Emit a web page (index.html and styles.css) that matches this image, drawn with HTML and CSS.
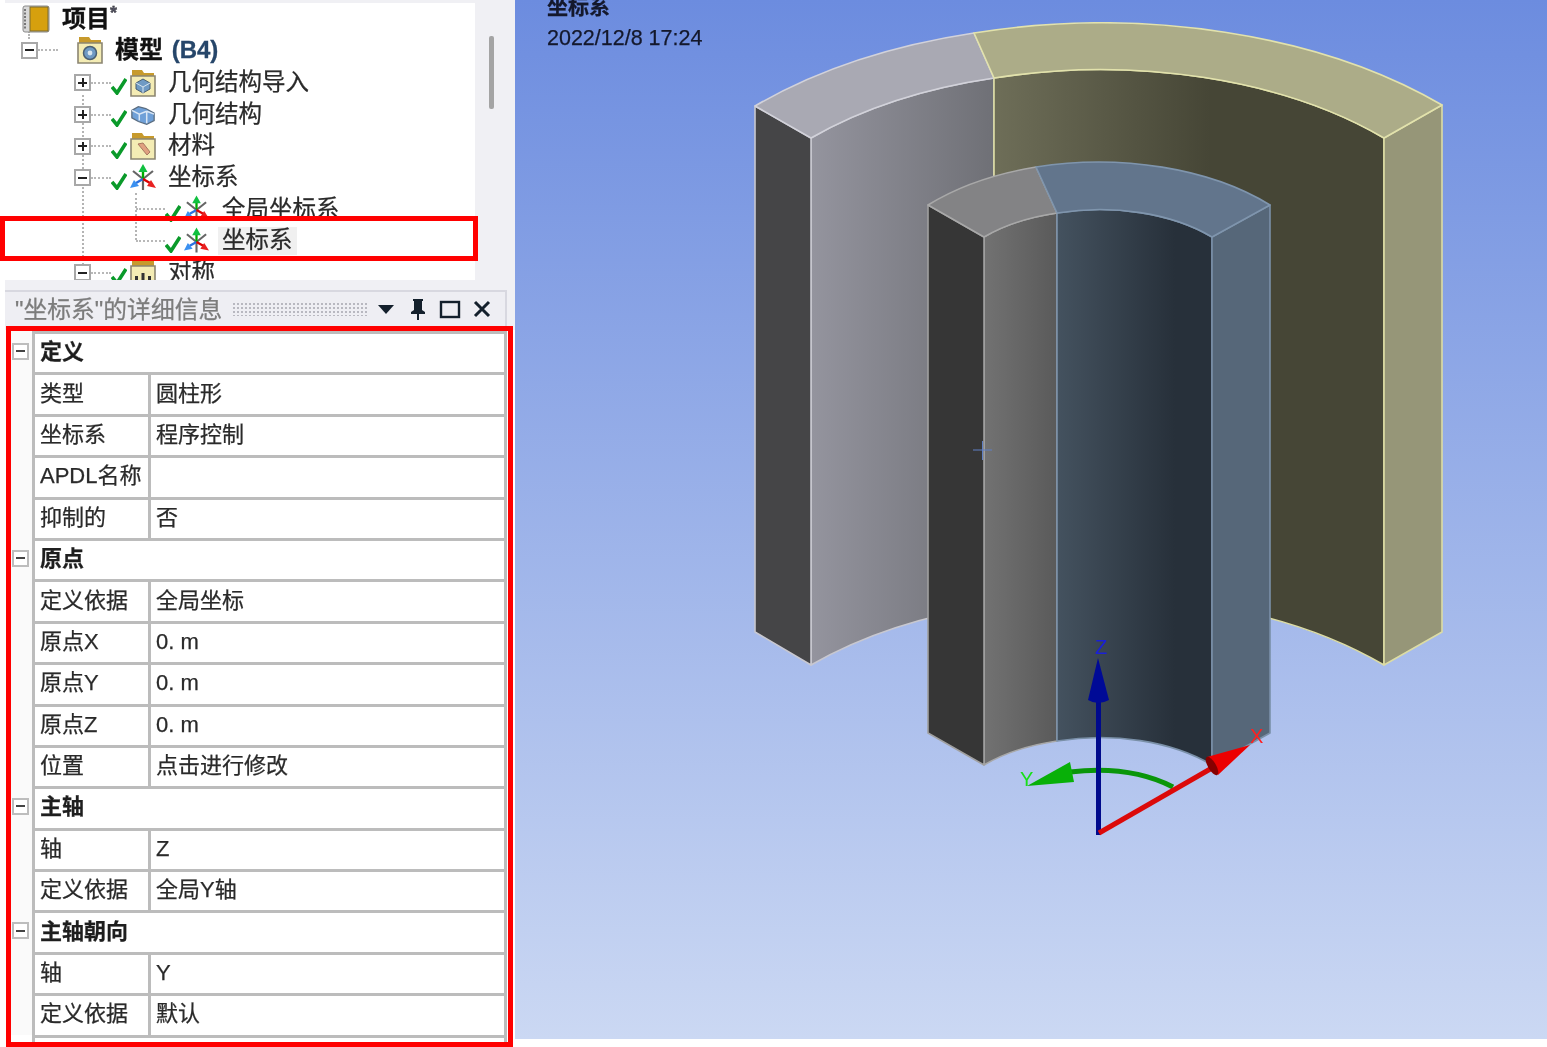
FILE: index.html
```html
<!DOCTYPE html>
<html lang="zh-CN">
<head>
<meta charset="utf-8">
<title>坐标系</title>
<link rel="stylesheet" href="styles.css">
</head>
<body>
<svg class="defs" aria-hidden="true">
  <symbol id="check" viewBox="0 0 16 18"><path d="M1 10l5 6L15 2" fill="none" stroke="#0a9a2a" stroke-width="3.6"/></symbol>
  <symbol id="folder" viewBox="0 0 26 28"><path d="M2 1h10l2 3h10v6H2z" fill="#c79a2c"/><path d="M1 7h24v20H1z" fill="#f4ecb4" stroke="#8c8672" stroke-width="1.6"/></symbol>
  <symbol id="folder-model" viewBox="0 0 26 28"><use href="#folder"/><circle cx="13" cy="17" r="6.5" fill="#6f9ac4" stroke="#4a5f72" stroke-width="1.5"/><circle cx="13" cy="17" r="2.4" fill="#d8e6f0"/></symbol>
  <symbol id="folder-geo" viewBox="0 0 26 28"><use href="#folder"/><path d="M6 14l7-4 7 4v6l-7 4-7-4z" fill="#6f9ac4" stroke="#4a5f72"/><path d="M6 14l7 4 7-4M13 18v6" fill="none" stroke="#d8e6f0"/></symbol>
  <symbol id="folder-mat" viewBox="0 0 26 28"><use href="#folder"/><path d="M8 12l5-1 7 9-3 3z" fill="#e0a080" stroke="#a87860"/></symbol>
  <symbol id="folder-sym" viewBox="0 0 26 28"><path d="M2 1h22v9H2z" fill="#c79a2c"/><path d="M1 7h24v20H1z" fill="#f4ecb4" stroke="#8c8672" stroke-width="1.6"/><path d="M5 22v-5h3v5zM11.500 22v-8h3v8zM18 22v-5h3v5z" fill="#333"/></symbol>
  <symbol id="geo" viewBox="0 0 28 22"><path d="M2 6l7-4 8 2 9 5v8l-8 4-9-3-7-4z" fill="#6fa0d8" stroke="#5a6d80" stroke-width="1.4"/><path d="M2 6l8 4 8-3M10 10v7M18 7l8 3M18 7v13" fill="none" stroke="#d9e6f5" stroke-width="1.6"/></symbol>
  <symbol id="triad" viewBox="0 0 26 28">
    <path d="M13 15L3 7M13 15l10-8M13 15v11" stroke="#666" stroke-width="2.2" fill="none"/>
    <path d="M13 15V6" stroke="#0a0" stroke-width="2.4"/><path d="M13 0l4.500 8h-9z" fill="#10c040"/>
    <path d="M13 15l-7 4" stroke="#2a70e0" stroke-width="2.4"/><path d="M0 24l4-8 5 6z" fill="#3a90f0"/>
    <path d="M13 15l7 4" stroke="#d00" stroke-width="2.4"/><path d="M26 24l-9-2 4-6z" fill="#e82020"/>
  </symbol>
  <symbol id="book" viewBox="0 0 28 28"><rect x="1" y="1" width="26" height="26" rx="2" fill="#d8d8d8" stroke="#8a8a8a"/><rect x="8" y="2" width="18" height="24" fill="#d6a00e" stroke="#7a6a30"/><path d="M3 4v20" stroke="#777" stroke-width="2" stroke-dasharray="2 1.5"/></symbol>
</svg>

<div class="app">
  <aside class="left">
    <nav class="tree">
      <i class="guide guide-root"></i>
      <i class="guide guide-l2"></i>
      <i class="guide guide-l3"></i>
      <div class="row row-root"><svg class="ico ico-book"><use href="#book"/></svg><span class="lbl lbl-bold">项目<sup class="star">*</sup></span></div>
      <div class="row row-l1"><span class="tog minus"></span><span class="dots dots-l1"></span><svg class="ico ico-l1"><use href="#folder-model"/></svg><span class="lbl lbl-bold lbl-l1">模型 <span class="ref">(B4)</span></span></div>
      <div class="row row-l2"><span class="tog plus"></span><span class="dots"></span><svg class="chk"><use href="#check"/></svg><svg class="ico"><use href="#folder-geo"/></svg><span class="lbl">几何结构导入</span></div>
      <div class="row row-l2"><span class="tog plus"></span><span class="dots"></span><svg class="chk"><use href="#check"/></svg><svg class="ico"><use href="#geo"/></svg><span class="lbl">几何结构</span></div>
      <div class="row row-l2"><span class="tog plus"></span><span class="dots"></span><svg class="chk"><use href="#check"/></svg><svg class="ico"><use href="#folder-mat"/></svg><span class="lbl">材料</span></div>
      <div class="row row-l2"><span class="tog minus"></span><span class="dots"></span><svg class="chk"><use href="#check"/></svg><svg class="ico"><use href="#triad"/></svg><span class="lbl">坐标系</span></div>
      <div class="row row-l3"><span class="dots dots-l3"></span><svg class="chk"><use href="#check"/></svg><svg class="ico ico-l3"><use href="#triad"/></svg><span class="lbl lbl-l3">全局坐标系</span></div>
      <div class="row row-l3"><span class="dots dots-l3"></span><svg class="chk"><use href="#check"/></svg><svg class="ico ico-l3"><use href="#triad"/></svg><span class="lbl lbl-l3 selected">坐标系</span></div>
      <div class="row row-l2"><span class="tog minus"></span><span class="dots"></span><svg class="chk"><use href="#check"/></svg><svg class="ico"><use href="#folder-sym"/></svg><span class="lbl">对称</span></div>
    </nav>
    <i class="scrollbar"></i>

    <header class="dhead">
      <span class="dtitle">"坐标系"的详细信息</span>
      <span class="grip"></span>
      <svg class="hbtn" viewBox="0 0 22 22"><path d="M3 7h16l-8 9z" fill="#14202c"/></svg>
      <svg class="hbtn" viewBox="0 0 22 22"><path d="M6 1h10v2h-1v9l3 2v2h-6v6h-2v-6H4v-2l3-2V3H6z" fill="#14202c"/></svg>
      <svg class="hbtn" viewBox="0 0 22 22"><rect x="2" y="4" width="18" height="15" fill="none" stroke="#14202c" stroke-width="2.4"/></svg>
      <svg class="hbtn" viewBox="0 0 22 22"><path d="M4 4l14 14M18 4L4 18" stroke="#14202c" stroke-width="3"/></svg>
    </header>

    <section class="props">
      <div class="prow"><span class="gut"><span class="tog minus"></span></span><span class="cell section">定义</span></div>
      <div class="prow"><span class="gut"></span><span class="cell key">类型</span><span class="cell val">圆柱形</span></div>
      <div class="prow"><span class="gut"></span><span class="cell key">坐标系</span><span class="cell val">程序控制</span></div>
      <div class="prow"><span class="gut"></span><span class="cell key">APDL名称</span><span class="cell val"></span></div>
      <div class="prow"><span class="gut"></span><span class="cell key">抑制的</span><span class="cell val">否</span></div>
      <div class="prow"><span class="gut"><span class="tog minus"></span></span><span class="cell section">原点</span></div>
      <div class="prow"><span class="gut"></span><span class="cell key">定义依据</span><span class="cell val">全局坐标</span></div>
      <div class="prow"><span class="gut"></span><span class="cell key">原点X</span><span class="cell val">0. m</span></div>
      <div class="prow"><span class="gut"></span><span class="cell key">原点Y</span><span class="cell val">0. m</span></div>
      <div class="prow"><span class="gut"></span><span class="cell key">原点Z</span><span class="cell val">0. m</span></div>
      <div class="prow"><span class="gut"></span><span class="cell key">位置</span><span class="cell val">点击进行修改</span></div>
      <div class="prow"><span class="gut"><span class="tog minus"></span></span><span class="cell section">主轴</span></div>
      <div class="prow"><span class="gut"></span><span class="cell key">轴</span><span class="cell val">Z</span></div>
      <div class="prow"><span class="gut"></span><span class="cell key">定义依据</span><span class="cell val">全局Y轴</span></div>
      <div class="prow"><span class="gut"><span class="tog minus"></span></span><span class="cell section">主轴朝向</span></div>
      <div class="prow"><span class="gut"></span><span class="cell key">轴</span><span class="cell val">Y</span></div>
      <div class="prow"><span class="gut"></span><span class="cell key">定义依据</span><span class="cell val">默认</span></div>
    </section>
  </aside>

  <main class="view">
    <svg class="scene" viewBox="515 0 1032 1039" aria-label="模型视图">
      <defs>
        <linearGradient id="gGrey" gradientUnits="userSpaceOnUse" x1="811" x2="994" y1="0" y2="0"><stop offset="0" stop-color="#94949e"/><stop offset="1" stop-color="#6f7076"/></linearGradient>
        <linearGradient id="gYel" gradientUnits="userSpaceOnUse" x1="994" x2="1210" y1="0" y2="0"><stop offset="0" stop-color="#6e6e58"/><stop offset="1" stop-color="#464636"/></linearGradient>
        <linearGradient id="gIn" gradientUnits="userSpaceOnUse" x1="984" x2="1057" y1="0" y2="0"><stop offset="0" stop-color="#727272"/><stop offset="1" stop-color="#5a5a5a"/></linearGradient>
        <linearGradient id="gBlue" gradientUnits="userSpaceOnUse" x1="1057" x2="1175" y1="0" y2="0"><stop offset="0" stop-color="#44525f"/><stop offset="1" stop-color="#27303a"/></linearGradient>
      </defs>
      <g stroke-width="1.6" stroke-linejoin="round">
        <path d="M811,138 A398 230 0 0 1 994,78 L994,605 A398 230 0 0 0 811,665 Z" fill="url(#gGrey)" stroke="#c8c8d0"/>
        <path d="M994,78 A398 230 0 0 1 1384,138 L1384,665 A398 230 0 0 0 994,605 Z" fill="url(#gYel)" stroke="#dcdca4"/>
        <path d="M755,106 L811,138 L811,665 L755,632 Z" fill="#454547" stroke="#c8c8d0"/>
        <path d="M1384,138 L1442,105 L1442,632 L1384,665 Z" fill="#969678" stroke="#dcdca4"/>
        <path d="M755,106 A478 276 0 0 1 974,33 L994,78 A398 230 0 0 0 811,138 Z" fill="#a9a9b3" stroke="#d2d2da"/>
        <path d="M974,33 A478 276 0 0 1 1442,105 L1384,138 A398 230 0 0 0 994,78 Z" fill="#acac88" stroke="#e2e2ac"/>
        <path d="M984,237 A156 90 0 0 1 1057,213 L1057,741 A156 90 0 0 0 984,765 Z" fill="url(#gIn)" stroke="#a8a8a8"/>
        <path d="M1057,213 A156 90 0 0 1 1212,237 L1212,765 A156 90 0 0 0 1057,741 Z" fill="url(#gBlue)" stroke="#7a90a8"/>
        <path d="M928,205 L984,237 L984,765 L928,733 Z" fill="#363636" stroke="#a0a0a0"/>
        <path d="M1212,237 L1270,205 L1270,733 L1212,765 Z" fill="#566779" stroke="#7a90a8"/>
        <path d="M928,205 A235 136 0 0 1 1036,167 L1057,213 A156 90 0 0 0 984,237 Z" fill="#838385" stroke="#a8a8a8"/>
        <path d="M1036,167 A235 136 0 0 1 1270,205 L1212,237 A156 90 0 0 0 1057,213 Z" fill="#62758c" stroke="#7f95ad"/>
      </g>
      <path d="M973 450h19M982.500 441v19" stroke="#5f7fc4" stroke-width="1"/>
      <path d="M1173,787 Q1130,765 1070,772" fill="none" stroke="#0a960a" stroke-width="5"/>
      <path d="M1027,786 L1070,762 L1074,782 Z" fill="#08b008"/>
      <path d="M1098.500,700 V835" stroke="#000a8c" stroke-width="5"/>
      <path d="M1098,658 L1109,700 Q1098,706 1088,700 Z" fill="#000a96"/>
      <path d="M1099,833 L1212,768" stroke="#dc0a0a" stroke-width="5"/>
      <path d="M1250,745 L1207,757 L1218,775 Z" fill="#ec0000"/>
      <ellipse cx="1212" cy="766" rx="4" ry="10.500" transform="rotate(-30 1212 766)" fill="#860000"/>
      <text class="axis axis-z" x="1095" y="654">Z</text>
      <text class="axis axis-x" x="1250" y="743">X</text>
      <text class="axis axis-y" x="1020" y="786">Y</text>
    </svg>
    <div class="legend">
      <div class="legend-name">坐标系</div>
      <div class="legend-date">2022/12/8 17:24</div>
    </div>
  </main>
</div>
<div class="mark mark-tree"></div>
<div class="mark mark-props"></div>
</body>
</html>
```

FILE: styles.css
```css
* { box-sizing: border-box; }
html, body { margin: 0; padding: 0; background: #fff; }
body {
  width: 1547px;
  height: 1047px;
  overflow: hidden;
  position: relative;
  font-family: "Liberation Sans", "Noto Sans CJK SC", sans-serif;
  color: #2c2c2c;
}
.defs { position: absolute; width: 0; height: 0; }

.app { display: flex; align-items: flex-start; }

/* left column */
.left {
  position: relative;
  width: 515px;
  height: 1047px;
  flex: none;
  padding: 3px 0 0 5px;
  background: linear-gradient(#f0f0f4, #f0f0f4) 5px 0 / 510px 330px no-repeat;
  filter: blur(.6px);
}

/* tree */
.tree {
  position: relative;
  width: 470px;
  height: 277px;
  overflow: hidden;
  background: #fff;
}
.guide { position: absolute; display: block; border-left: 2px dotted #b4b4b4; }
.guide-root { left: 23px; top: 28px; height: 8px; }
.guide-l2 { left: 77px; top: 92px; height: 190px; }
.guide-l3 { left: 130px; top: 190px; height: 47px; }

.row {
  position: relative;
  display: flex;
  align-items: center;
  height: 31.600px;
  white-space: nowrap;
}
.row-root { padding-left: 17px; }
.row-l1 { padding-left: 16px; }
.row-l2 { padding-left: 69px; padding-top: 2px; }
.row-l3 { padding-left: 131px; padding-top: 2px; }

.lbl { font-size: 23.500px; margin-left: 12px; line-height: 1; color: #2a2a2a; -webkit-text-stroke: .25px #2a2a2a; }
.lbl-bold { font-weight: 700; font-size: 24px; color: #111; -webkit-text-stroke: .3px #111; }
.lbl-l1 { margin-left: 12px; }
.lbl-l3 { margin-left: 9px; padding: 2px 4px; }
.selected { background: #f0f0f0; }
.star { font-size: 18px; color: #556; line-height: 0; vertical-align: 8px; }
.ref { color: #26466a; margin-left: 2px; -webkit-text-stroke: .3px #26466a; }

.ico { width: 26px; height: 28px; margin-left: 3px; flex: none; }
.ico-book { width: 28px; margin-left: 0; }
.ico-l1 { margin-left: 19px; }
.ico-l3 { width: 25px; }
.chk { width: 16px; height: 18px; flex: none; margin-top: 7px; }

.tog {
  position: relative;
  display: block;
  width: 17px;
  height: 17px;
  flex: none;
  border: 2px solid #a8a8a8;
  background: #fff;
}
.tog::before {
  content: "";
  position: absolute;
  left: 2px;
  right: 2px;
  top: 5.500px;
  height: 2px;
  background: #222;
}
.plus::after {
  content: "";
  position: absolute;
  top: 2px;
  bottom: 2px;
  left: 5.500px;
  width: 2px;
  background: #222;
}
.dots { display: block; width: 20px; height: 0; flex: none; border-top: 2px dotted #b8b8b8; }
.dots-l1 { width: 20px; }
.dots-l3 { width: 29px; }

.scrollbar {
  position: absolute;
  left: 489px;
  top: 36px;
  width: 5px;
  height: 73px;
  background: #a4a4a4;
  border-radius: 2px;
}

/* details header */
.dhead {
  display: flex;
  align-items: center;
  width: 502px;
  height: 36px;
  margin-top: 10px;
  padding-left: 10px;
  background: #eeeef3;
  border-top: 2px solid #d8d8e0;
  border-right: 2px solid #d8d8e0;
}
.dtitle { font-size: 23.800px; color: #7c7c7c; line-height: 1; padding-top: 2px; white-space: nowrap; -webkit-text-stroke: .25px #7c7c7c; }
.grip {
  display: block;
  width: 137px;
  height: 14px;
  margin: 0 6px 0 10px;
  flex: none;
  background: radial-gradient(circle, #b8b8c0 1.100px, transparent 1.300px) 0 0 / 4px 4px;
}
.hbtn { width: 22px; height: 22px; flex: none; margin-right: 10px; }

/* property grid */
.props {
  width: 497px;
  height: 713px;
  margin: 5px 0 0 5px;
  overflow: hidden;
  background: #fff;
}
.prow {
  display: grid;
  grid-template-columns: 22px 116px 1fr;
  height: 41.400px;
}
.gut { display: flex; align-items: center; padding-left: 2px; background: #fafafa; }
.gut .tog { width: 17px; height: 17px; border-color: #bdbdbd; margin-bottom: 1px; }
.gut .tog::before { background: #444; }
.cell {
  display: flex;
  align-items: center;
  padding-bottom: 2px;
  font-size: 22px;
  line-height: 1;
  color: #2a2a2a;
  -webkit-text-stroke: .25px #2a2a2a;
  white-space: nowrap;
  border-top: 3px solid #bcbcbc;
}
.key { padding-left: 5px; border-left: 3px solid #bcbcbc; }
.val { padding-left: 5px; border-left: 3px solid #bcbcbc; border-right: 3px solid #bcbcbc; }
.section {
  grid-column: 2 / 4;
  padding-left: 5px;
  font-weight: 700;
  color: #1e1e1e;
  border-left: 3px solid #bcbcbc;
  border-right: 3px solid #bcbcbc;
}
.props::after {
  content: "";
  display: block;
  height: 6px;
  margin-left: 22px;
  border-top: 3px solid #bcbcbc;
  border-left: 3px solid #bcbcbc;
  border-right: 3px solid #bcbcbc;
}

/* 3D viewport */
.view {
  position: relative;
  flex: 1;
  height: 1039px;
  overflow: hidden;
  background: linear-gradient(#6c8cdf, #cbd8f3);
}
.scene { position: absolute; left: 0; top: 0; width: 1032px; height: 1039px; filter: blur(.6px); }
.axis { font-family: "Liberation Sans", sans-serif; font-size: 20px; }
.axis-z { fill: #1a20d8; }
.axis-x { fill: #ff2020; }
.axis-y { fill: #18e018; }
.legend { position: relative; padding-left: 32px; margin-top: -8px; color: #14182c; filter: blur(.6px); }
.legend-name { font-size: 21px; font-weight: 700; line-height: 30px; -webkit-text-stroke: .25px #14182c; }
.legend-date { font-size: 21.500px; line-height: 30px; margin-top: 1px; -webkit-text-stroke: .25px #14182c; }

/* red annotation frames */
.mark { position: absolute; border: 5px solid #f00; }
.mark-tree { left: 0; top: 216px; width: 478px; height: 45px; }
.mark-props { left: 6px; top: 326px; width: 507px; height: 721px; }
```
